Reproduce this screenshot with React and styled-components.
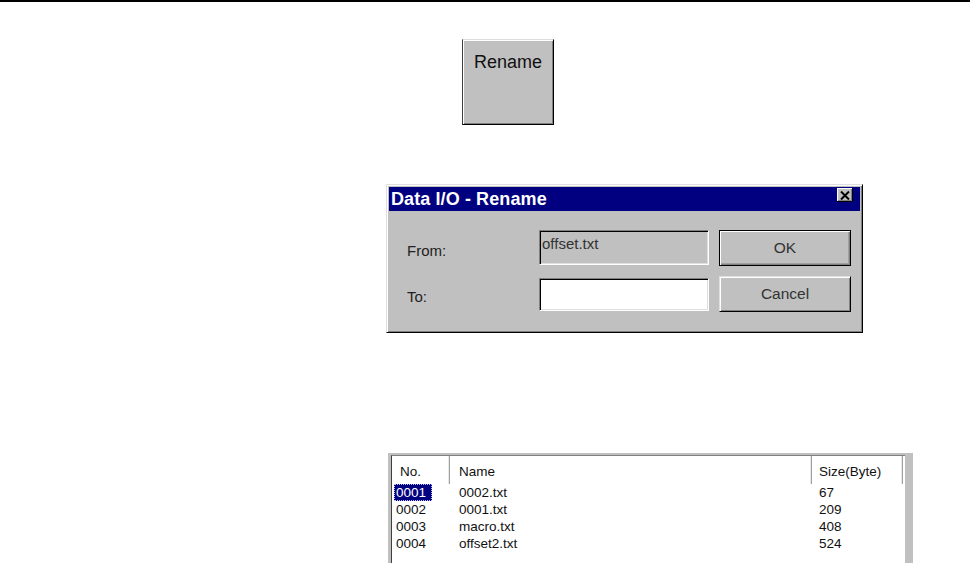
import React from "react";
import styled, { createGlobalStyle } from "styled-components";

const Global = createGlobalStyle`
  html, body { margin: 0; padding: 0; background: #fff; }
  body { font-family: "Liberation Sans", Arial, sans-serif; color: #000; }
`;

/* Page with the heavy rule along its top edge */
const Page = styled.div`
  box-sizing: border-box;
  width: 970px;
  height: 563px;
  overflow: hidden;
  border-top: 2px solid #000;
  display: flex;
  flex-direction: column;
  align-items: flex-start;
`;

const Figure = styled.div`
  flex: none;
  margin-left: ${(p) => p.$left}px;
  margin-top: ${(p) => p.$top}px;
`;

/* Large toolbar-style command button */
const BigButton = styled.div`
  box-sizing: border-box;
  width: 92px;
  height: 86px;
  background: #c0c0c0;
  border-top: 1px solid #dcdcdc;
  border-left: 1px solid #3c3c3c;
  border-right: 1px solid #000;
  border-bottom: 1px solid #000;
  box-shadow: inset 1px 1px #fff, inset -1px -1px #808080;
  display: flex;
  justify-content: center;
  padding-top: 12px;
  font-size: 18px;
  color: #111;
`;

/* Dialog window */
const Window = styled.div`
  box-sizing: border-box;
  width: 477px;
  height: 149px;
  background: #c0c0c0;
  border-top: 1px solid #dfdfdf;
  border-left: 1px solid #dfdfdf;
  border-right: 1px solid #000;
  border-bottom: 1px solid #000;
  box-shadow: inset 1px 1px #fff, inset -1px -1px #808080;
  padding: 2px;
  display: flex;
  flex-direction: column;
`;

const TitleBar = styled.div`
  height: 24px;
  background: #000080;
  display: flex;
  align-items: center;
  justify-content: space-between;
  padding: 0 7px 0 2px;
`;

const Title = styled.span`
  color: #fff;
  font-weight: bold;
  font-size: 18px;
  letter-spacing: 0.1px;
`;

const CloseBox = styled.div`
  box-sizing: border-box;
  width: 16px;
  height: 14px;
  background: #c0c0c0;
  box-shadow: inset -1px -1px #000, inset 1px 1px #fff, inset -2px -2px #808080;
  display: flex;
  align-items: center;
  justify-content: center;
  margin-top: -8px;
`;

const Body = styled.div`
  display: grid;
  grid-template-columns: 122px 170px 132px;
  grid-auto-rows: 36px;
  column-gap: 10px;
  row-gap: 10px;
  padding: 19px 0 0 18px;
  align-items: center;
`;

const Label = styled.div`
  font-size: 15px;
  color: #222;
  padding-top: 4px;
`;

const Field = styled.div`
  box-sizing: border-box;
  height: ${(p) => (p.$disabled ? 35 : 33)}px;
  align-self: ${(p) => (p.$disabled ? "start" : "center")};
  background: ${(p) => (p.$disabled ? "#c0c0c0" : "#fff")};
  border-top: 1px solid #808080;
  border-left: 1px solid #808080;
  border-right: 1px solid #fff;
  border-bottom: 1px solid #fff;
  box-shadow: inset 1px 1px #000, inset -1px -1px #dfdfdf;
  font-size: 15px;
  color: #333;
  padding: 4px 0 0 2px;
`;

const Button = styled.div`
  box-sizing: border-box;
  height: 36px;
  background: #c0c0c0;
  border: 1px solid ${(p) => (p.$default ? "#000" : "#dfdfdf")};
  border-right-color: #000;
  border-bottom-color: #000;
  box-shadow: ${(p) =>
    p.$default
      ? "inset 1px 1px #fff, inset -1px -1px #808080, inset -2px -2px #a0a0a0"
      : "inset 1px 1px #fff, inset -1px -1px #808080"};
  display: flex;
  align-items: center;
  justify-content: center;
  font-size: 15.5px;
  color: #333;
`;

/* File list view */
const ListFrame = styled.div`
  box-sizing: border-box;
  width: 525px;
  height: 140px;
  background: #c0c0c0;
  padding: 2px 8px 0 3px;
  display: flex;
`;

const ListView = styled.div`
  flex: 1;
  background: #fff;
  border-left: 1px solid #404040;
  border-top: 1px solid #808080;
  font-size: 13.5px;
  color: #111;
`;

const Grid = styled.div`
  display: grid;
  grid-template-columns: 58px 362px 91px;
`;

const HeadCell = styled.div`
  box-sizing: border-box;
  height: 28px;
  display: flex;
  align-items: center;
  padding-left: ${(p) => p.$pad}px;
  padding-top: 3px;
  border-right: 1px solid #a0a0a0;
  box-shadow: inset -1px 0 #e8e8e8;
`;

const Cell = styled.div`
  height: 17px;
  display: flex;
  align-items: center;
  padding-left: ${(p) => p.$pad}px;
  white-space: nowrap;
`;

const Selected = styled.span`
  background: #000080;
  color: #fff;
  outline: 1px dotted #c0c0ff;
  outline-offset: -1px;
  padding: 0 6px 0 2px;
  line-height: 17px;
`;

const Plain = styled.span`
  padding-left: 2px;
`;

const files = [
  ["0001", "0002.txt", "67"],
  ["0002", "0001.txt", "209"],
  ["0003", "macro.txt", "408"],
  ["0004", "offset2.txt", "524"],
];

export default function App() {
  return (
    <Page>
      <Global />

      <Figure $left={462} $top={37}>
        <BigButton>Rename</BigButton>
      </Figure>

      <Figure $left={386} $top={59}>
        <Window>
          <TitleBar>
            <Title>Data I/O - Rename</Title>
            <CloseBox>
              <svg width="10" height="9" viewBox="0 0 10 9">
                <path d="M1 0.5 L9 8.5 M9 0.5 L1 8.5" stroke="#000" strokeWidth="2" />
              </svg>
            </CloseBox>
          </TitleBar>
          <Body>
            <Label>From:</Label>
            <Field $disabled>offset.txt</Field>
            <Button $default>OK</Button>
            <Label>To:</Label>
            <Field />
            <Button>Cancel</Button>
          </Body>
        </Window>
      </Figure>

      <Figure $left={388} $top={120}>
        <ListFrame>
          <ListView>
            <Grid>
              <HeadCell $pad={8}>No.</HeadCell>
              <HeadCell $pad={9}>Name</HeadCell>
              <HeadCell $pad={7}>Size(Byte)</HeadCell>
              {files.map(([no, name, size], i) => (
                <React.Fragment key={no}>
                  <Cell $pad={2}>{i === 0 ? <Selected>{no}</Selected> : <Plain>{no}</Plain>}</Cell>
                  <Cell $pad={9}>{name}</Cell>
                  <Cell $pad={7}>{size}</Cell>
                </React.Fragment>
              ))}
            </Grid>
          </ListView>
        </ListFrame>
      </Figure>
    </Page>
  );
}
